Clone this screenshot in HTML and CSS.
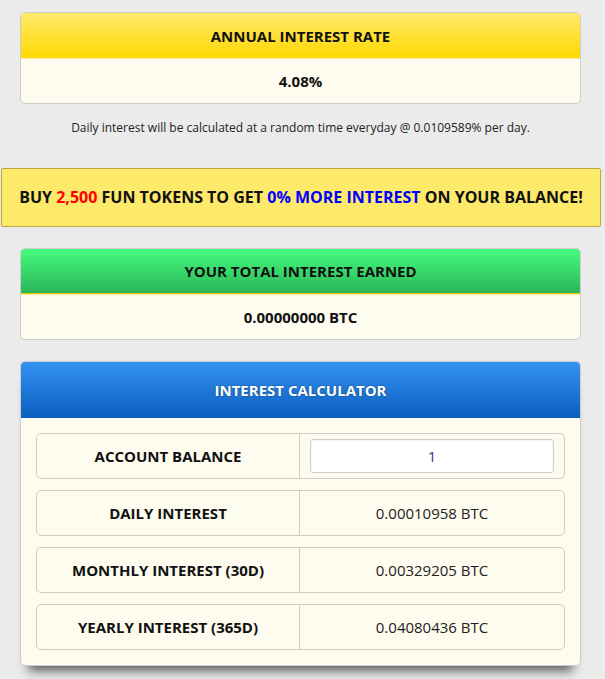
FILE: index.html
```html
<!DOCTYPE html>
<html>
<head>
<meta charset="utf-8">
<link rel="stylesheet" href="styles.css">
</head>
<body>
<div class="page">
  <div class="card">
    <div class="card-head head-yellow">ANNUAL INTEREST RATE</div>
    <div class="card-body">4.08%</div>
  </div>
  <p class="note">Daily interest will be calculated at a random time everyday @ 0.0109589% per day.</p>

  <div class="banner">BUY <span class="red">2,500</span> FUN TOKENS TO GET <span class="blue">0% MORE INTEREST</span> ON YOUR BALANCE!</div>

  <div class="card card-green">
    <div class="card-head head-green">YOUR TOTAL INTEREST EARNED</div>
    <div class="card-body">0.00000000 BTC</div>
  </div>

  <div class="card card-calc">
    <div class="card-head head-blue">INTEREST CALCULATOR</div>
    <div class="calc-body">
      <div class="row">
        <div class="cell label">ACCOUNT BALANCE</div>
        <div class="cell value input-cell"><input class="balance" type="text" value="1"></div>
      </div>
      <div class="row">
        <div class="cell label">DAILY INTEREST</div>
        <div class="cell value">0.00010958 BTC</div>
      </div>
      <div class="row">
        <div class="cell label">MONTHLY INTEREST (30D)</div>
        <div class="cell value">0.00329205 BTC</div>
      </div>
      <div class="row">
        <div class="cell label">YEARLY INTEREST (365D)</div>
        <div class="cell value">0.04080436 BTC</div>
      </div>
    </div>
  </div>
</div>
</body>
</html>
```

FILE: styles.css
```css
html, body {
  margin: 0;
  padding: 0;
}
body {
  background: #ebebeb;
  font-family: "Open Sans", "DejaVu Sans", sans-serif;
  color: #111;
  height: 679px;
  overflow: hidden;
}
.page {
  padding: 12px 24px 0 20px;
}
.card {
  border: 1px solid #cccccc;
  border-radius: 5px;
  background: #fefcee;
  overflow: hidden;
}
.card-head {
  height: 45px;
  display: flex;
  align-items: center;
  justify-content: center;
  font-weight: 700;
  font-size: 15px;
  color: #111;
}
.head-yellow {
  background: linear-gradient(to bottom, #ffe96b 0%, #ffd800 100%);
}
.head-green {
  background: linear-gradient(to bottom, #45fb7d 0%, #2cb65a 100%);
  border-bottom: 1px solid #f2c900;
  height: 44px;
}
.head-blue {
  height: 56px;
  background: linear-gradient(to bottom, #3593f2 0%, #0a5ec0 100%);
  color: #fff;
  text-shadow: 0 0 2px rgba(0,0,0,0.45);
}
.card-body {
  height: 45px;
  display: flex;
  align-items: center;
  justify-content: center;
  font-weight: 700;
  font-size: 15px;
  border-top: 1px solid #f6e9a0;
  box-sizing: border-box;
}
.note {
  margin: 0;
  padding: 15px 0 0;
  height: 49px;
  font-size: 12px;
  line-height: 18px;
  text-align: center;
  color: #222;
}
.banner {
  margin: 0 -20px 0 -19px;
  height: 57px;
  line-height: 57px;
  border: 1px solid #bcab3c;
  border-radius: 2px;
  background: #fde96a;
  text-align: center;
  font-weight: 700;
  font-size: 16px;
  color: #111;
  white-space: nowrap;
}
.red { color: #ff0000; }
.blue { color: #0000ff; }
.card-green {
  margin-top: 21px;
}
.card-calc {
  margin-top: 21px;
  box-shadow: 0 13px 10px -8px rgba(0,0,0,0.6);
}
.calc-body {
  padding: 15px 15px 15px;
  display: flex;
  flex-direction: column;
  gap: 11px;
}
.row {
  display: grid;
  grid-template-columns: 262px 1fr;
  height: 44px;
  border: 1px solid #d0cdc4;
  border-radius: 5px;
}
.cell {
  display: flex;
  align-items: center;
  justify-content: center;
  font-size: 15px;
}
.label {
  font-weight: 700;
  color: #111;
}
.value {
  border-left: 1px solid #d0cdc4;
  color: #222;
}
.input-cell {
  padding: 5px 10px;
}
.balance {
  width: 100%;
  height: 34px;
  box-sizing: border-box;
  border: 1px solid #cccccc;
  border-radius: 3px;
  background: #fff;
  text-align: center;
  font-family: "Open Sans", "DejaVu Sans", sans-serif;
  font-size: 15px;
  color: #4b2a80;
  box-shadow: inset 0 1px 2px rgba(0,0,0,0.06);
}
```
